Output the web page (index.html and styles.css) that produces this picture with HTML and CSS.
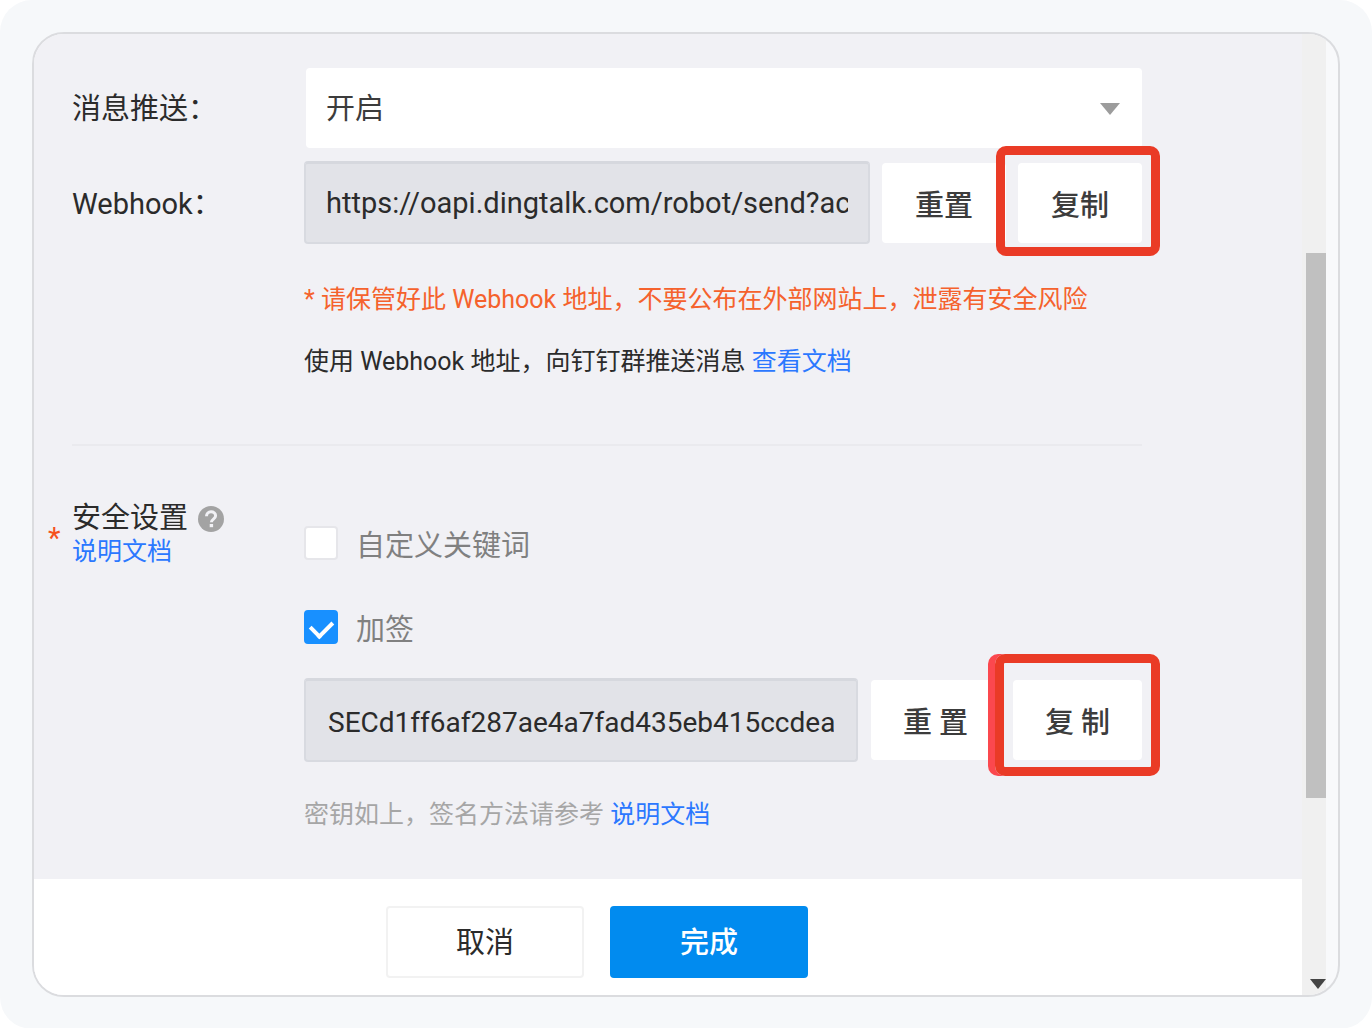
FILE: index.html
```html
<!DOCTYPE html>
<html lang="zh-CN">
<head>
  <meta charset="UTF-8">
  <title>机器人设置</title>
  <link rel="stylesheet" href="styles.css">
</head>
<body>
  <div class="page">
    <div class="window">
      <form class="main">
        <div class="content">
          <div class="row">
            <label class="label" for="push">消息推送：</label>
            <div class="select-box">
              <select id="push">
                <option>开启</option>
                <option>关闭</option>
              </select>
              <svg class="arrow" viewBox="0 0 20 12" aria-hidden="true"><path d="M0 0h20L10 12z"/></svg>
            </div>
          </div>

          <div class="row">
            <label class="label" for="webhook">Webhook：</label>
            <div class="copy-line">
              <input class="text" id="webhook" type="text" readonly value="https://oapi.dingtalk.com/robot/send?access_token=">
              <button class="btn" type="button">重置</button>
              <div class="marked">
                <button class="btn" type="button">复制</button>
                <span class="mark"></span>
              </div>
            </div>
          </div>

          <div class="tips">
            <p class="warn">* 请保管好此 Webhook 地址，不要公布在外部网站上，泄露有安全风险</p>
            <p>使用 Webhook 地址，向钉钉群推送消息 <a href="#">查看文档</a></p>
          </div>

          <hr>

          <div class="row security">
            <div class="label required">
              <span class="star">*</span>
              <div>
                <div class="title">安全设置
                  <svg class="help" viewBox="0 0 26 26" aria-hidden="true">
                    <circle cx="13" cy="13" r="13"/>
                    <path d="M8.5 10.2c0-2.7 1.9-4.4 4.5-4.4s4.6 1.6 4.6 4c0 3.2-4.2 3.4-4.2 6.4"/>
                    <rect x="11.7" y="18" width="3.4" height="3.2"/>
                  </svg>
                </div>
                <a href="#">说明文档</a>
              </div>
            </div>
            <div class="options">
              <label class="check"><input type="checkbox"> 自定义关键词</label>
              <label class="check"><input type="checkbox" checked> 加签</label>
              <div class="copy-line wide">
                <input class="text" type="text" aria-label="密钥" readonly value="SECd1ff6af287ae4a7fad435eb415ccdeab2">
                <button class="btn" type="button">重 置</button>
                <div class="marked">
                  <button class="btn" type="button">复 制</button>
                  <span class="mark mark-double"></span>
                </div>
              </div>
              <p class="hint">密钥如上，签名方法请参考 <a href="#">说明文档</a></p>
            </div>
          </div>
        </div>

        <div class="footer">
          <button class="action" type="button">取消</button>
          <button class="action primary" type="submit">完成</button>
        </div>
      </form>

      <div class="scrollbar">
        <div class="thumb"></div>
        <svg class="down" viewBox="0 0 16 10" aria-hidden="true"><path d="M0 0h16L8 10z"/></svg>
      </div>
    </div>
  </div>
</body>
</html>
```
FILE: styles.css
```css
* {
  box-sizing: border-box;
}

body {
  margin: 0;
  background-color: #fff;
  font-family: Roboto, "Noto Sans CJK SC", sans-serif;
  font-size: 29px;
  color: #2b2b2b;
}

p {
  margin: 0;
}

a {
  color: #2b78ff;
  text-decoration: none;
}

.page {
  display: flex;
  min-height: 100vh;
  padding: 32px;
  border-radius: 32px;
  background-color: #f6f8fa;
}

.window {
  display: flex;
  flex: 1;
  padding-right: 12px;
  border: 2px solid #dbdcdf;
  border-radius: 32px;
  background-color: #f8f9fb;
  overflow: hidden;
}

.main {
  display: flex;
  flex: 1;
  flex-direction: column;
  background-color: #f1f1f5;
}

.content {
  flex: 1;
  padding: 34px 160px 46px 14px;
}

.row {
  display: grid;
  grid-template-columns: 256px 1fr;
  align-items: center;
  margin-bottom: 13px;
}

.label {
  padding: 0 0 4px 24px;
}

/* message push select */
.select-box {
  position: relative;
  padding-left: 2px;
}

select {
  appearance: none;
  display: block;
  width: 100%;
  height: 80px;
  padding: 2px 20px 0;
  border: none;
  border-radius: 4px;
  background-color: #fff;
  font: inherit;
  color: #3c3c3c;
}

.arrow {
  position: absolute;
  right: 22px;
  top: 35px;
  width: 20px;
  height: 12px;
  fill: #9c9c9c;
}

/* read-only field with its buttons */
.copy-line {
  display: flex;
  align-items: center;
  gap: 12px;
}

.text {
  flex: 1;
  min-width: 0;
  height: 83px;
  padding: 0 20px;
  border: 2px solid #d8dae0;
  border-top: 3px solid #d6d8de;
  border-radius: 4px;
  background-color: #e2e3e8;
  font: inherit;
  color: #2b2b2b;
}

.btn {
  display: block;
  width: 124px;
  height: 80px;
  padding: 0;
  border: none;
  border-radius: 4px;
  background-color: #fff;
  font: inherit;
  font-weight: 500;
  color: #3c3c3c;
}

.wide {
  gap: 13px;
}

.wide .text {
  height: 84px;
  padding: 4px 22px 0;
  font-size: 28px;
}

.wide .btn {
  width: 129px;
}

.marked {
  position: relative;
}

.mark {
  position: absolute;
  top: -17px;
  right: -18px;
  bottom: -13px;
  left: -22px;
  border: 9px solid #ea3b26;
  border-radius: 10px;
  pointer-events: none;
}

.mark-double {
  top: -26px;
  bottom: -16px;
  left: -18px;
  box-shadow: -7px 0 0 #fb484e;
}

.tips {
  margin-top: 38px;
  padding-left: 256px;
}

.tips p,
.hint {
  font-size: 25px;
  line-height: 36px;
}

.tips .warn {
  margin-bottom: 26px;
  color: #f5622d;
}

hr {
  height: 2px;
  margin: 64px 0 56px 24px;
  border: none;
  background-color: #eaeaee;
}

/* security section */
.security {
  align-items: start;
  margin-bottom: 0;
}

.required {
  display: flex;
  align-items: center;
  padding: 0;
  line-height: 33px;
}

.required a {
  display: block;
  font-size: 25px;
}

.star {
  width: 24px;
  padding-top: 6px;
  color: #f5511e;
}

.title {
  display: flex;
  align-items: center;
  gap: 10px;
}

.help {
  width: 26px;
  height: 26px;
  fill: #a3a3a3;
}

.help path {
  fill: none;
  stroke: #f1f1f5;
  stroke-width: 3;
}

.help rect {
  fill: #f1f1f5;
}

.options {
  padding-top: 24px;
}

.check {
  display: flex;
  align-items: center;
  gap: 18px;
  height: 34px;
  margin-bottom: 50px;
  color: #808080;
}

.check input {
  appearance: none;
  display: flex;
  justify-content: center;
  width: 34px;
  height: 34px;
  margin: 0;
  border: 2px solid #e6e6ea;
  border-radius: 4px;
  background-color: #fff;
}

.check input:checked {
  border-color: #1890ff;
  background-color: #1890ff;
}

.check input:checked::after {
  content: "";
  width: 11px;
  height: 17px;
  margin-top: 4px;
  border: solid #fff;
  border-width: 0 4px 4px 0;
  transform: rotate(45deg);
}

.check + .copy-line {
  margin-top: -16px;
}

.hint {
  margin-top: 35px;
  color: #a6a6a6;
}

.footer {
  display: flex;
  gap: 26px;
  padding: 27px 0 17px 352px;
  background-color: #fff;
}

.action {
  width: 198px;
  height: 72px;
  padding: 0 0 4px;
  border: 2px solid #f2f2f2;
  border-radius: 4px;
  background-color: #fff;
  font: inherit;
  color: #2b2b2b;
}

.primary {
  border-color: #018bef;
  background-color: #018bef;
  font-weight: 500;
  color: #fff;
}

.scrollbar {
  display: flex;
  flex-direction: column;
  align-items: flex-end;
  justify-content: space-between;
  width: 24px;
  padding: 219px 0 6px;
  background-color: #f0f0f0;
}

.thumb {
  width: 20px;
  height: 74%;
  background-color: #c0c0c0;
}

.down {
  width: 16px;
  height: 10px;
  fill: #444;
}
```
